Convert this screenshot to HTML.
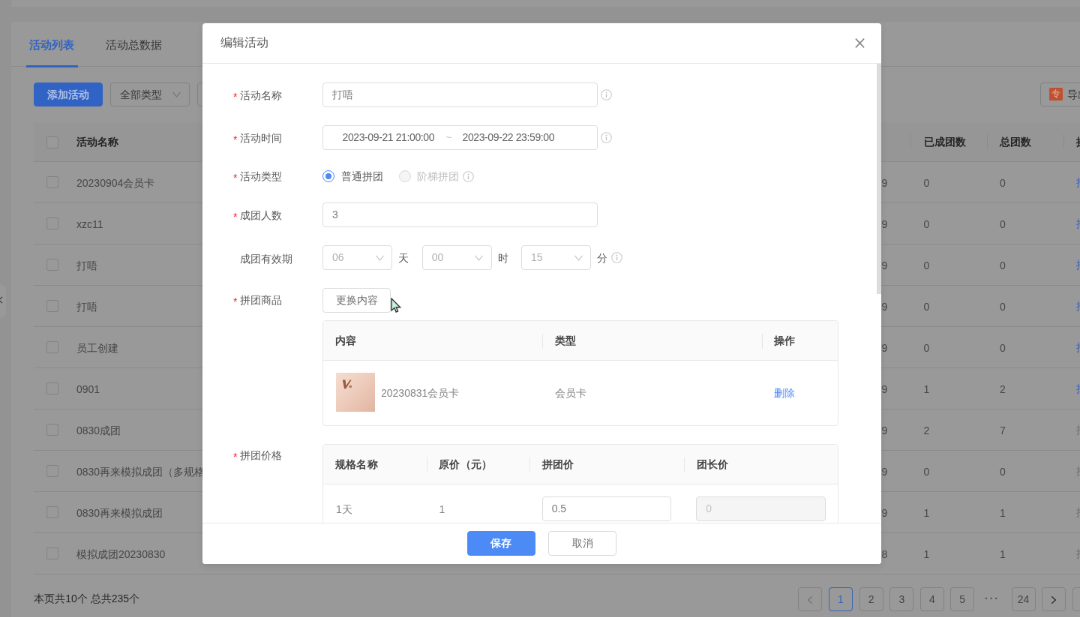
<!DOCTYPE html>
<html lang="zh">
<head>
<meta charset="utf-8">
<title>编辑活动</title>
<style>
*{box-sizing:border-box;margin:0;padding:0}
html,body{width:1080px;height:617px;overflow:hidden;background:#f5f5f5}
body{font-family:"Liberation Sans",sans-serif;font-size:14px;color:#595959}
#s{position:absolute;left:0;top:0;width:1440px;height:823px;transform:scale(.75);transform-origin:0 0;will-change:transform;overflow:hidden;background:#f5f5f5}
.abs{position:absolute}
/* ---------- background page ---------- */
#topcard{left:15px;top:0;width:1430px;height:9px;background:#fff}
#card{left:15px;top:29.4px;width:1430px;height:800px;background:#fff;border-radius:3px 0 0 0}
#handle{left:0;top:378px;width:8px;height:47px;background:#fff;clip-path:polygon(0 0,100% 12%,100% 88%,0 100%)}
#handle-x{left:-3px;top:391px;font-size:15px;line-height:20px;color:#555}
.tab{top:49px;height:22px;line-height:22px;font-size:15.4px;white-space:nowrap}
#tabline{left:15px;top:88px;width:1430px;height:1px;background:#e8e8e8}
#tabink{left:35px;top:87px;width:69px;height:2.6px;background:#3163c0}
.btn{height:32.4px;line-height:30.4px;border:1px solid #d9d9d9;border-radius:4px;background:#fff;text-align:center;white-space:nowrap;color:#595959}
.btn.pri{background:#4c8af5;border-color:#4c8af5;color:#fff;font-weight:bold}
.chev{width:11px;height:8px}
#thead{left:45px;top:163px;width:1400px;height:53px;background:#fafafa;border-bottom:1px solid #e8e8e8}
.th{top:163px;height:52px;line-height:53px;font-weight:bold;color:#3d3d3d;white-space:nowrap}
.vsep{top:179px;width:1px;height:20px;background:#e8e8e8}
.row{left:45px;width:1400px;height:55px;border-bottom:1px solid #e8e8e8}
.row span{position:absolute;top:.7px;line-height:55px;white-space:nowrap;color:#757575}
.cb{position:absolute;left:17px;top:19px;width:16px;height:16px;border:1px solid #d9d9d9;border-radius:2px;background:#fff}
.row span.lk{color:#4c8af5}
.row span.dis{color:#bfbfbf}
.pg{top:783px;width:32px;height:32px;line-height:30px;border:1px solid #d9d9d9;border-radius:4px;background:#fff;text-align:center;color:#737373}
.pg.on{border-color:#4c8af5;color:#4c8af5}
#mask{left:0;top:0;width:1440px;height:823px;background:rgba(0,0,0,.4)}
/* ---------- modal ---------- */
#modal{left:270px;top:30.9px;width:905.4px;height:721px;background:#fff;border-radius:4px;box-shadow:0 3px 10px rgba(0,0,0,.10);overflow:hidden}
#mi{left:0;top:-.9px;width:906px;height:722px}
#mhead{left:0;top:0;width:906px;height:55px;border-bottom:1px solid #e8e8e8}
#mtitle{left:24px;top:16px;font-size:16px;line-height:22px;color:#595959}
#mfoot{left:0;top:667px;width:906px;height:55px;border-top:1px solid #e8e8e8;background:#fff}
#sbar{left:899.2px;top:55px;width:6.2px;height:307px;background:#dcdcdc}
.lab{left:50px;height:22px;line-height:22px;white-space:nowrap;color:#595959}
.lab i{position:absolute;left:-9px;top:2px;font-style:normal;color:#f5222d;font-size:14px;font-family:"Liberation Sans",sans-serif}
.inp{left:160px;height:32.6px;border:1px solid #dcdcdc;border-radius:4px;background:#fff;line-height:31.6px;padding-left:12px;white-space:nowrap;color:#7a7a7a}
.sel{color:#b0b0b0}
.unit{height:22px;line-height:22px;color:#595959}
.info{width:15px;height:15px;margin:-.5px 0 0 -.5px}
.tbl{left:160px;width:688px;border:1px solid #e8e8e8;border-radius:4px;overflow:hidden;background:#fff}
.tbl .hd{position:absolute;left:0;top:0;width:100%;height:53px;background:#fafafa;border-bottom:1px solid #e8e8e8}
.tbl b{position:absolute;top:0;line-height:53px;letter-spacing:.3px;color:#444;white-space:nowrap}
.tbl u{position:absolute;top:17px;width:1px;height:20px;background:#e8e8e8}
.tbl span{position:absolute;white-space:nowrap;line-height:22px;color:#858585}
</style>
</head>
<body>
<div id="s">
<!--BGS-->
<div class="abs" id="topcard"></div>
<div class="abs" id="card"></div>
<div class="abs" id="handle"></div>
<svg class="abs" style="left:-4px;top:395.3px" width="8" height="10" viewBox="0 0 8 10"><path d="M7 1 L2.5 5 L7 9" fill="none" stroke="#6e6e6e" stroke-width="1.4"/></svg>
<div class="abs tab" style="left:141px;color:#595959">活动总数据</div>
<div class="abs" id="tabline"></div>
<div class="abs btn" style="left:147.3px;top:110px;width:105.4px;text-align:left;padding-left:12px">全部类型<svg class="abs chev" style="left:81.5px;top:11.4px" viewBox="0 0 11 8"><path d="M.6 .8 L5.5 7 L10.4 .8" fill="none" stroke="#c4c4c4" stroke-width="1.15"/></svg></div>
<div class="abs btn" style="left:263.3px;top:110px;width:120px"></div>
<div class="abs btn" style="left:1386.5px;top:110px;width:90px;text-align:left"><span class="abs" style="left:35px;top:0">导出</span></div>
<div class="abs" id="thead"></div>
<div class="cb abs" style="left:62px;top:182px"></div>
<div class="abs th" style="left:102px">活动名称</div>
<div class="abs vsep" style="left:1214px"></div>
<div class="abs vsep" style="left:1316.3px"></div>
<div class="abs vsep" style="left:1418px"></div>
<div class="abs th" style="left:1231.5px">已成团数</div>
<div class="abs th" style="left:1333px">总团数</div>
<div class="abs th" style="left:1434.5px">操作</div>
<div class="abs row" style="top:216.2px"><div class="cb"></div><span style="left:57px">20230904会员卡</span><span style="left:1130.5px">9</span><span style="left:1186.5px">0</span><span style="left:1288px">0</span></div>
<div class="abs row" style="top:271.2px"><div class="cb"></div><span style="left:57px">xzc11</span><span style="left:1130.5px">9</span><span style="left:1186.5px">0</span><span style="left:1288px">0</span></div>
<div class="abs row" style="top:326.2px"><div class="cb"></div><span style="left:57px">打唔</span><span style="left:1130.5px">9</span><span style="left:1186.5px">0</span><span style="left:1288px">0</span></div>
<div class="abs row" style="top:381.2px"><div class="cb"></div><span style="left:57px">打唔</span><span style="left:1130.5px">9</span><span style="left:1186.5px">0</span><span style="left:1288px">0</span></div>
<div class="abs row" style="top:436.2px"><div class="cb"></div><span style="left:57px">员工创建</span><span style="left:1130.5px">9</span><span style="left:1186.5px">0</span><span style="left:1288px">0</span></div>
<div class="abs row" style="top:491.2px"><div class="cb"></div><span style="left:57px">0901</span><span style="left:1130.5px">9</span><span style="left:1186.5px">1</span><span style="left:1288px">2</span></div>
<div class="abs row" style="top:546.2px"><div class="cb"></div><span style="left:57px">0830成团</span><span style="left:1130.5px">9</span><span style="left:1186.5px">2</span><span style="left:1288px">7</span></div>
<div class="abs row" style="top:601.2px"><div class="cb"></div><span style="left:57px">0830再来模拟成团（多规格）</span><span style="left:1130.5px">9</span><span style="left:1186.5px">0</span><span style="left:1288px">0</span></div>
<div class="abs row" style="top:656.2px"><div class="cb"></div><span style="left:57px">0830再来模拟成团</span><span style="left:1130.5px">9</span><span style="left:1186.5px">1</span><span style="left:1288px">1</span></div>
<div class="abs row" style="top:711.2px"><div class="cb"></div><span style="left:57px">模拟成团20230830</span><span style="left:1130.5px">8</span><span style="left:1186.5px">1</span><span style="left:1288px">1</span></div>
<div class="abs" style="left:45.3px;top:787px;line-height:22px;color:#434343;white-space:nowrap">本页共10个 总共235个</div>
<div class="abs pg " style="left:1064px"><svg width="8" height="10" viewBox="0 0 8 10" style="vertical-align:-1px"><path d="M6.8 .3 L1.6 5 L6.8 9.7" fill="none" stroke="#bfbfbf" stroke-width="1.3"/></svg></div>
<div class="abs pg " style="left:1104.8px"></div>
<div class="abs pg " style="left:1145.6px">2</div>
<div class="abs pg " style="left:1186.3px">3</div>
<div class="abs pg " style="left:1227px">4</div>
<div class="abs pg " style="left:1267.2px">5</div>
<div class="abs pg " style="left:1348.6px">24</div>
<div class="abs pg " style="left:1389.4px"><svg width="8" height="10" viewBox="0 0 8 10" style="vertical-align:-1px"><path d="M1.2 .3 L6.4 5 L1.2 9.7" fill="none" stroke="#434343" stroke-width="1.3"/></svg></div>
<div class="abs pg " style="left:1430px"></div>
<div class="abs" style="left:1313px;top:783px;width:22px;height:32px;line-height:30px;color:#8c8c8c;letter-spacing:2px;font-weight:bold;white-space:nowrap">···</div>
<!--BGE-->
<div class="abs" id="mask"></div>
<!--OVS-->
<div class="abs tab" style="left:38.5px;color:#3163c0;font-weight:bold">活动列表</div>
<div class="abs" id="tabink"></div>
<div class="abs btn" style="left:45.3px;top:110px;width:91.4px;background:#3163c4;border-color:#3163c4;color:#aebfe3;font-weight:bold">添加活动</div>
<div class="abs" style="left:1434.5px;top:216.2px;line-height:55px;white-space:nowrap;color:#3160c0">推广</div>
<div class="abs" style="left:1434.5px;top:271.2px;line-height:55px;white-space:nowrap;color:#3160c0">推广</div>
<div class="abs" style="left:1434.5px;top:326.2px;line-height:55px;white-space:nowrap;color:#3160c0">推广</div>
<div class="abs" style="left:1434.5px;top:381.2px;line-height:55px;white-space:nowrap;color:#3160c0">推广</div>
<div class="abs" style="left:1434.5px;top:436.2px;line-height:55px;white-space:nowrap;color:#3160c0">推广</div>
<div class="abs" style="left:1434.5px;top:491.2px;line-height:55px;white-space:nowrap;color:#3160c0">推广</div>
<div class="abs" style="left:1434.5px;top:546.2px;line-height:55px;white-space:nowrap;color:#6b6b6b">推广</div>
<div class="abs" style="left:1434.5px;top:601.2px;line-height:55px;white-space:nowrap;color:#6b6b6b">推广</div>
<div class="abs" style="left:1434.5px;top:656.2px;line-height:55px;white-space:nowrap;color:#6b6b6b">推广</div>
<div class="abs" style="left:1434.5px;top:711.2px;line-height:55px;white-space:nowrap;color:#6b6b6b">推广</div>
<div class="abs pg" style="left:1104.8px;background:transparent;border-color:#3d66b8;color:#3163c0">1</div>
<div class="abs" style="left:1399.2px;top:117px;width:18.2px;height:17.4px;border-radius:1.5px;background:#c0512e;color:#e6b5a3;font-size:11.5px;line-height:17.4px;text-align:center">专</div>
<!--OVE-->
<!--MS-->
<div class="abs" id="modal"><div class="abs" id="mi">
<div class="abs" id="mhead"></div><div class="abs" id="mtitle">编辑活动</div>
<svg class="abs" style="left:870.3px;top:21px" width="13" height="13" viewBox="0 0 13 13"><path d="M.9 .6 L12.1 12.4 M12.1 .6 L.9 12.4" stroke="#858585" stroke-width="1.55" fill="none"/></svg>
<div class="abs" id="mbody" style="left:0;top:55px;width:906px;height:612px;overflow:hidden">
<div class="abs lab" style="top:31px"><i>*</i>活动名称</div>
<div class="abs inp" style="top:25px;width:366.7px">打唔</div><svg class="abs info" style="left:531px;top:34px" viewBox="0 0 14 14"><circle cx="7" cy="7" r="6.3" fill="none" stroke="#c9c9c9" stroke-width="1.05"/><rect x="6.35" y="6" width="1.3" height="4.4" fill="#c2c2c2"/><circle cx="7" cy="4" r=".85" fill="#c2c2c2"/></svg>
<div class="abs lab" style="top:87.5px"><i>*</i>活动时间</div>
<div class="abs inp" style="top:82.30000000000001px;width:366.7px;padding-left:0"><span class="abs" style="left:25.5px;letter-spacing:-.39px;color:#616161">2023-09-21 21:00:00</span><span class="abs" style="left:163.5px;color:#bfbfbf">~</span><span class="abs" style="left:185.5px;letter-spacing:-.39px;color:#616161">2023-09-22 23:59:00</span></div><svg class="abs info" style="left:531px;top:91.30000000000001px" viewBox="0 0 14 14"><circle cx="7" cy="7" r="6.3" fill="none" stroke="#c9c9c9" stroke-width="1.05"/><rect x="6.35" y="6" width="1.3" height="4.4" fill="#c2c2c2"/><circle cx="7" cy="4" r=".85" fill="#c2c2c2"/></svg>
<div class="abs lab" style="top:139px"><i>*</i>活动类型</div>
<div class="abs" style="left:160px;top:142px;width:16px;height:16px;border:1px solid #4c8af5;border-radius:50%"><div class="abs" style="left:3px;top:3px;width:8px;height:8px;border-radius:50%;background:#4c8af5"></div></div>
<div class="abs unit" style="left:185px;top:139px">普通拼团</div>
<div class="abs" style="left:262.3px;top:142px;width:16px;height:16px;border:1px solid #d9d9d9;border-radius:50%;background:#f5f5f5"></div>
<div class="abs unit" style="left:286px;top:139px;color:#bfbfbf">阶梯拼团</div><svg class="abs info" style="left:347.7px;top:143px" viewBox="0 0 14 14"><circle cx="7" cy="7" r="6.3" fill="none" stroke="#c9c9c9" stroke-width="1.05"/><rect x="6.35" y="6" width="1.3" height="4.4" fill="#c2c2c2"/><circle cx="7" cy="4" r=".85" fill="#c2c2c2"/></svg>
<div class="abs lab" style="top:191px"><i>*</i>成团人数</div>
<div class="abs inp" style="top:185px;width:366.7px">3</div>
<div class="abs lab" style="top:248.5px">成团有效期</div>
<div class="abs inp sel" style="left:160px;top:242.3px;width:93.3px">06<svg class="abs chev" style="left:69.5px;top:11.6px" viewBox="0 0 11 8"><path d="M.6 .8 L5.5 7 L10.4 .8" fill="none" stroke="#c4c4c4" stroke-width="1.15"/></svg></div>
<div class="abs inp sel" style="left:292.7px;top:242.3px;width:93.3px">00<svg class="abs chev" style="left:69.5px;top:11.6px" viewBox="0 0 11 8"><path d="M.6 .8 L5.5 7 L10.4 .8" fill="none" stroke="#c4c4c4" stroke-width="1.15"/></svg></div>
<div class="abs inp sel" style="left:425px;top:242.3px;width:93.3px">15<svg class="abs chev" style="left:69.5px;top:11.6px" viewBox="0 0 11 8"><path d="M.6 .8 L5.5 7 L10.4 .8" fill="none" stroke="#c4c4c4" stroke-width="1.15"/></svg></div>
<div class="abs unit" style="left:261.3px;top:248px">天</div>
<div class="abs unit" style="left:393.6px;top:248px">时</div>
<div class="abs unit" style="left:526.3px;top:248px">分</div>
<svg class="abs info" style="left:545px;top:251.3px" viewBox="0 0 14 14"><circle cx="7" cy="7" r="6.3" fill="none" stroke="#c9c9c9" stroke-width="1.05"/><rect x="6.35" y="6" width="1.3" height="4.4" fill="#c2c2c2"/><circle cx="7" cy="4" r=".85" fill="#c2c2c2"/></svg>
<div class="abs lab" style="top:303.5px"><i>*</i>拼团商品</div>
<div class="abs inp" style="top:299px;width:91.4px;height:32.6px;padding:0;text-align:center;color:#6e6e6e">更换内容</div>
<div class="abs tbl" style="top:341.7px;height:141px"><div class="hd"></div><b style="left:16px">内容</b><u style="left:292px"></u><b style="left:309px">类型</b><u style="left:584.5px"></u><b style="left:601px">操作</b><div class="abs" id="thumb" style="left:16.7px;top:69.3px;width:52.3px;height:52px;background:linear-gradient(135deg,#f5ddd0 0%,#edcbbb 50%,#e1b4a0 100%)"><svg class="abs" style="left:8px;top:8px" width="16" height="16" viewBox="0 0 16 16"><path d="M.8 1.6 L4.6 1.6 L5.4 9.2 L10.6 1.6 L12.6 1.6 L5.2 13.2 L3 13.2 Z" fill="#9a5b42"/><circle cx="11.3" cy="10.4" r="1.9" fill="#b97b62"/></svg></div><span style="left:77px;top:85px">20230831会员卡</span><span style="left:309px;top:85px">会员卡</span><span style="left:601px;top:85px;color:#4c8af5">删除</span></div>
<div class="abs lab" style="top:511.4px"><i>*</i>拼团价格</div>
<div class="abs tbl" style="top:507.29999999999995px;height:200px"><div class="hd"></div><b style="left:15.7px">规格名称</b><u style="left:137.5px"></u><b style="left:154px">原价（元）</b><u style="left:275px"></u><b style="left:291.7px">拼团价</b><u style="left:481px"></u><b style="left:497.5px">团长价</b><span style="left:17px;top:75px">1天</span><span style="left:154.5px;top:75px">1</span><div class="abs inp" style="left:291.7px;top:68.7px;width:172.7px">0.5</div><div class="abs inp" style="left:497.3px;top:68.7px;width:172.7px;background:#f5f5f5;color:#c4c4c4">0</div></div>
</div>
<div class="abs" id="sbar"></div>
<div class="abs" id="mfoot"><div class="abs btn pri" style="left:352.7px;top:10.4px;width:91.4px">保存</div><div class="abs btn" style="left:461px;top:10.4px;width:91.4px;color:#6e6e6e">取消</div></div>
</div></div>
<svg class="abs" style="left:520.6px;top:397.3px" width="16" height="22" viewBox="0 0 16 22"><path d="M1 1 L1 17 L4.8 13.6 L7.2 19 L9.6 18 L7.3 12.7 L12.6 12.7 Z" fill="#c9eedb" stroke="#333" stroke-width="1.4" stroke-linejoin="miter"/></svg>
<!--ME-->
</div>
</body>
</html>
